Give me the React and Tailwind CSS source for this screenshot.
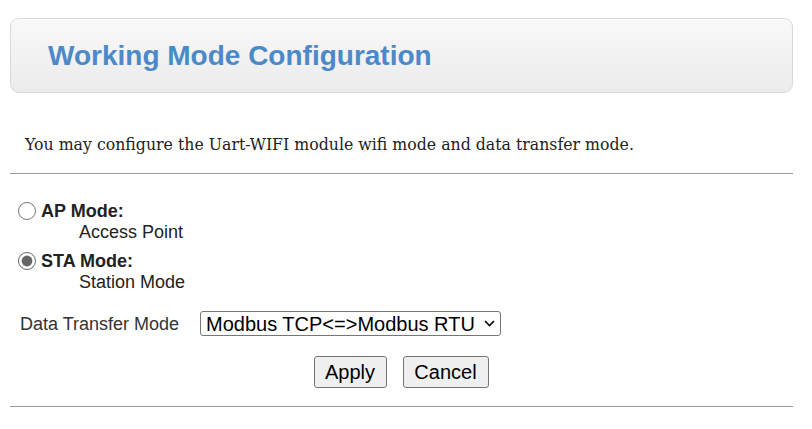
import React from 'react'

/**
 * Working mode configuration page
 */
function App() {
  return (
    <div className="w-[812px] h-[429px] bg-white text-[#222] font-['Liberation_Sans',Arial,sans-serif] overflow-hidden">
      {/* Header */}
      <div className="pt-[18px] pl-[10px] pr-[19px]">
        <div className="h-[75px] rounded-[9px] border border-[#d9d9d9] bg-gradient-to-b from-[#f9f9f9] to-[#ebebeb] flex items-center pl-[37px] shadow-[inset_0_1px_0_#fff]">
          <h1 className="text-[28px] font-bold text-[#4c89c9] leading-none mt-[1px]">
            Working Mode Configuration
          </h1>
        </div>
      </div>

      <p className="mt-[41px] ml-[25px] h-[22px] leading-[22px] font-['DejaVu_Serif',Georgia,serif] text-[15.75px] text-[#222]">
        You may configure the Uart-WIFI module wifi mode and data transfer mode.
      </p>

      <div className="ml-[10px] mr-[19px] mt-[17px] border-t border-[#9a9a9a]" />

      {/* Wifi mode */}
      <div className="mt-[27px] pl-[18px] text-[18px]">
        <label className="flex items-center gap-[5px] h-[20px]">
          <input type="radio" name="mode" className="w-[18px] h-[18px] m-0 accent-[#666]" />
          <span className="font-bold">AP Mode:</span>
        </label>
        <div className="pl-[61px] h-[22px] leading-[22px]">Access Point</div>
        <label className="flex items-center gap-[5px] h-[20px] mt-[8px]">
          <input type="radio" name="mode" defaultChecked className="w-[18px] h-[18px] m-0 accent-[#666]" />
          <span className="font-bold">STA Mode:</span>
        </label>
        <div className="pl-[61px] h-[22px] leading-[22px]">Station Mode</div>
      </div>

      {/* Data transfer */}
      <div className="mt-[18px] pl-[20px] flex items-center">
        <span className="text-[18px] text-[#333] w-[180px]">Data Transfer Mode</span>
        <div className="relative">
          <select className="appearance-none h-[25px] w-[301px] border border-[#767676] rounded-[3px] text-[20px] leading-none text-black pl-[5px] bg-white">
            <option>Modbus TCP&lt;=&gt;Modbus RTU</option>
          </select>
          <svg className="absolute right-[6px] top-[9px] pointer-events-none" width="11" height="7" viewBox="0 0 11 7">
            <path d="M1 1l4.5 4.5L10 1" fill="none" stroke="#000" strokeWidth="1.6" />
          </svg>
        </div>
      </div>

      <div className="mt-[18px] flex justify-center gap-[16px] pr-[10px]">
        <button className="h-[32px] w-[73px] border border-[#767676] rounded-[3px] bg-[#efefef] text-[20px] text-black">
          Apply
        </button>
        <button className="h-[32px] w-[86px] border border-[#767676] rounded-[3px] bg-[#efefef] text-[20px] text-black">
          Cancel
        </button>
      </div>

      <div className="ml-[10px] mr-[19px] mt-[18px] border-t border-[#9a9a9a]" />
    </div>
  )
}

export default App
